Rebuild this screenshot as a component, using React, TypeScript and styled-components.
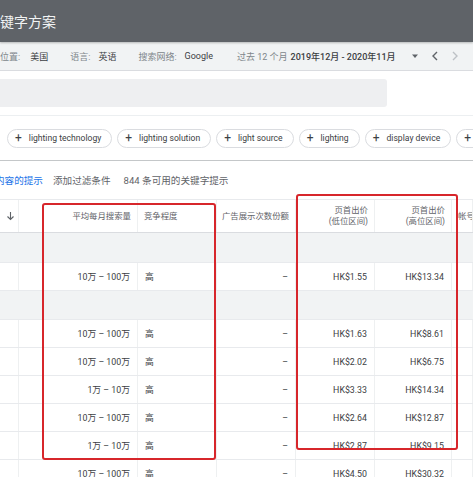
import * as React from 'react';
import styled, { createGlobalStyle } from 'styled-components';

const GlobalStyle = createGlobalStyle`
  *, *::before, *::after {
    box-sizing: border-box;
  }
  html, body {
    margin: 0;
    padding: 0;
    background: #ffffff;
    overflow: hidden;
  }
  body {
    font-family: Roboto, "Noto Sans CJK SC", "Noto Sans", sans-serif;
    color: #3c4043;
  }
`;

// ── Layout ─────────────────────────────
const Page = styled.div`
  width: 473px;
  height: 477px;
  overflow: hidden;
  display: flex;
  flex-direction: column;

  & > * {
    flex-shrink: 0;
  }
`;

const TopBar = styled.div`
  height: 42px;
  background: #5f6368;
  display: flex;
  align-items: center;
  box-shadow: 0 1px 2px rgba(0, 0, 0, 0.25);
  position: relative;
  z-index: 1;
`;

const Title = styled.h1`
  margin: 0 0 0 -14px;
  font-size: 14px;
  font-weight: 400;
  color: #f1f3f4;
`;

const Toolbar = styled.div`
  height: 29px;
  background: #f1f3f4;
  border-bottom: 1px solid #dadce0;
  display: flex;
  align-items: center;
  font-size: 9px;
  white-space: nowrap;
`;

const ToolItem = styled.div<{ $gap: number; $after: number }>`
  display: flex;
  align-items: center;
  gap: ${({ $gap }) => $gap}px;
  margin-right: ${({ $after }) => $after}px;
`;

const Label = styled.span`
  color: #80868b;
`;

const Value = styled.span<{ $strong?: boolean }>`
  color: #3c4043;
  font-weight: ${({ $strong }) => ($strong ? 500 : 400)};
`;

const ToolIcons = styled.div`
  display: flex;
  align-items: center;
  gap: 12px;
  margin-left: auto;
  margin-right: 14px;
`;

const SearchArea = styled.div`
  height: 45px;
  border-bottom: 1px solid #eceff1;
  display: flex;
  align-items: center;
`;

const SearchBox = styled.div`
  width: 387px;
  height: 28px;
  background: #eeeff1;
  border-radius: 0 3px 3px 0;
`;

const ChipRow = styled.div`
  height: 45px;
  border-bottom: 1px solid #c4c7c9;
  display: flex;
  align-items: center;
  gap: 5px;
  padding-left: 7px;
  white-space: nowrap;
`;

const Chip = styled.div`
  flex: none;
  height: 19px;
  border: 1px solid #dadce0;
  border-radius: 10px;
  display: flex;
  align-items: center;
  gap: 7px;
  padding: 0 10px 0 7px;
  font-size: 8.6px;
  color: #3c4043;
`;

const Plus = styled.span`
  font-size: 12px;
  line-height: 1;
  color: #3c4043;
`;

const FilterRow = styled.div`
  height: 39px;
  border-bottom: 1px solid #e8eaed;
  display: flex;
  align-items: center;
  gap: 10px;
  font-size: 9.6px;
  white-space: nowrap;
`;

const FilterText = styled.span<{ $link?: boolean }>`
  color: ${({ $link }) => ($link ? '#1a73e8' : '#5f6368')};
  margin-left: ${({ $link }) => ($link ? '-5px' : '0')};
  margin-right: ${({ $link }) => ($link ? '0' : '3px')};
`;

// ── Table ─────────────────────────────
const TableWrap = styled.div`
  position: relative;
  flex: 1;
`;

const cols = '19px 119px 79px 79px 79px 77px 1fr';

const HeaderRow = styled.div`
  display: grid;
  grid-template-columns: ${cols};
  height: 33px;
  border-bottom: 1px solid #dadce0;
  font-size: 8.4px;
  color: #5f6368;
`;

const HeadCell = styled.div<{ $align?: 'left' | 'right' }>`
  display: flex;
  flex-direction: column;
  justify-content: center;
  align-items: ${({ $align }) => ($align === 'left' ? 'flex-start' : 'flex-end')};
  text-align: ${({ $align }) => ($align === 'left' ? 'left' : 'right')};
  padding: 0 6px;
  border-right: 1px solid #eef0f1;
  line-height: 11px;
  white-space: nowrap;
  overflow: hidden;
`;

const GroupRow = styled.div<{ $h: number }>`
  height: ${({ $h }) => $h}px;
  background: #f1f3f4;
  border-bottom: 1px solid #e8eaed;
`;

const Row = styled.div`
  display: grid;
  grid-template-columns: ${cols};
  height: 28px;
  border-bottom: 1px solid #e8eaed;
  font-size: 8.8px;
  color: #3c4043;
`;

const Cell = styled.div<{ $align?: 'left' | 'right' }>`
  display: flex;
  align-items: center;
  justify-content: ${({ $align }) => ($align === 'left' ? 'flex-start' : 'flex-end')};
  padding: 0 7px;
  border-right: 1px solid #eef0f1;
  color: #3c4043;
  white-space: nowrap;
  overflow: hidden;
`;

const Highlight = styled.div`
  position: absolute;
  border: 2px solid #d7262b;
  border-radius: 3px;
  pointer-events: none;
`;

const rowsA = [
  { volume: '10万 – 100万', level: '高', share: '–', low: 'HK$1.55', high: 'HK$13.34' },
];

const rowsB = [
  { volume: '10万 – 100万', level: '高', share: '–', low: 'HK$1.63', high: 'HK$8.61' },
  { volume: '10万 – 100万', level: '高', share: '–', low: 'HK$2.02', high: 'HK$6.75' },
  { volume: '1万 – 10万', level: '高', share: '–', low: 'HK$3.33', high: 'HK$14.34' },
  { volume: '10万 – 100万', level: '高', share: '–', low: 'HK$2.64', high: 'HK$12.87' },
  { volume: '1万 – 10万', level: '高', share: '–', low: 'HK$2.87', high: 'HK$9.15' },
  { volume: '10万 – 100万', level: '高', share: '–', low: 'HK$4.50', high: 'HK$30.32' },
];

const chips = ['lighting technology', 'lighting solution', 'light source', 'lighting', 'display device', 'lamp'];

type RowData = (typeof rowsA)[number];

function DataRow({ r }: { r: RowData }) {
  return (
    <Row>
      <Cell />
      <Cell>{r.volume}</Cell>
      <Cell $align="left">{r.level}</Cell>
      <Cell>{r.share}</Cell>
      <Cell>{r.low}</Cell>
      <Cell>{r.high}</Cell>
      <Cell />
    </Row>
  );
}

export default function App(): React.ReactElement {
  return (
    <Page>
      <GlobalStyle />
      <TopBar>
        <Title>关键字方案</Title>
      </TopBar>

      <Toolbar>
        <ToolItem $gap={10} $after={22}>
          <Label>位置:</Label>
          <Value>美国</Value>
        </ToolItem>
        <ToolItem $gap={8} $after={22}>
          <Label>语言:</Label>
          <Value>英语</Value>
        </ToolItem>
        <ToolItem $gap={8} $after={24}>
          <Label>搜索网络:</Label>
          <Value>Google</Value>
        </ToolItem>
        <ToolItem $gap={3} $after={0}>
          <Label>过去 12 个月</Label>
          <Value $strong>2019年12月 - 2020年11月</Value>
        </ToolItem>
        <ToolIcons>
          <svg width="8" height="6" viewBox="0 0 8 6">
            <path d="M1 1.5h6L4 5z" fill="#5f6368" />
          </svg>
          <svg width="8" height="10" viewBox="0 0 8 10">
            <path d="M6 1L2 5l4 4" stroke="#5f6368" strokeWidth="1.4" fill="none" />
          </svg>
          <svg width="8" height="10" viewBox="0 0 8 10">
            <path d="M2 1l4 4-4 4" stroke="#bdc1c6" strokeWidth="1.4" fill="none" />
          </svg>
        </ToolIcons>
      </Toolbar>

      <SearchArea>
        <SearchBox />
      </SearchArea>

      <ChipRow>
        {chips.map((c) => (
          <Chip key={c}>
            <Plus>+</Plus>
            {c}
          </Chip>
        ))}
      </ChipRow>

      <FilterRow>
        <FilterText $link>内容的提示</FilterText>
        <FilterText>添加过滤条件</FilterText>
        <FilterText>844 条可用的关键字提示</FilterText>
      </FilterRow>

      <TableWrap>
        <HeaderRow>
          <HeadCell $align="left">
            <svg width="9" height="10" viewBox="0 0 9 10">
              <path d="M4.5 1v7.5M1.5 5.5l3 3 3-3" stroke="#5f6368" strokeWidth="1.1" fill="none" />
            </svg>
          </HeadCell>
          <HeadCell>平均每月搜索量</HeadCell>
          <HeadCell $align="left">竞争程度</HeadCell>
          <HeadCell>广告展示次数份额</HeadCell>
          <HeadCell>
            <span>页首出价</span>
            <span>(低位区间)</span>
          </HeadCell>
          <HeadCell>
            <span>页首出价</span>
            <span>(高位区间)</span>
          </HeadCell>
          <HeadCell $align="left">帐号状态</HeadCell>
        </HeaderRow>

        <GroupRow $h={30} />
        {rowsA.map((r, i) => (
          <DataRow key={i} r={r} />
        ))}
        <GroupRow $h={29} />
        {rowsB.map((r, i) => (
          <DataRow key={i} r={r} />
        ))}

        <Highlight style={{ left: 42, top: 3, width: 174, height: 257 }} />
        <Highlight style={{ left: 296, top: -6, width: 162, height: 256 }} />
      </TableWrap>
    </Page>
  );
}
